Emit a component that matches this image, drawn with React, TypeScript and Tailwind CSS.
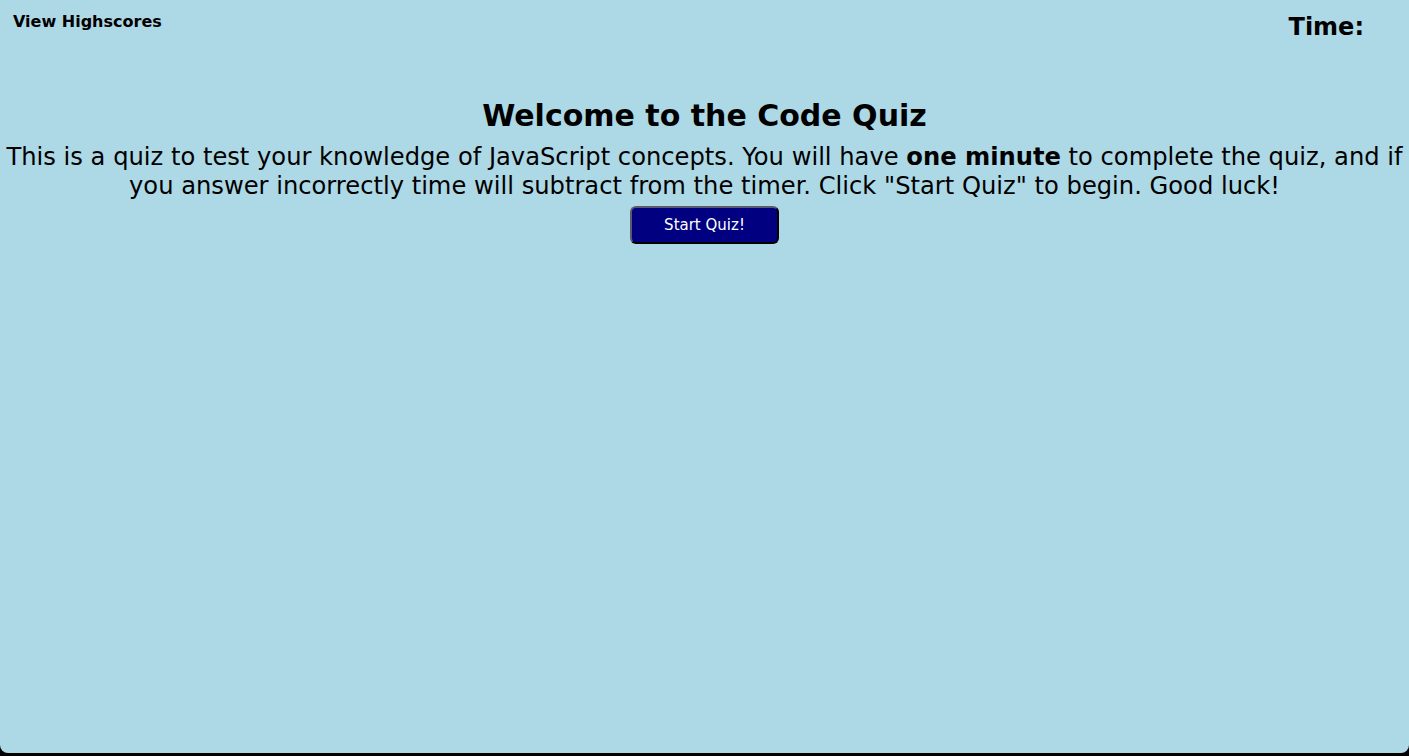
import React from 'react';

const App: React.FC = () => {
  return (
    <div className="h-[756px] w-full bg-black">
      <div className="h-[753px] w-full bg-[#add8e6] rounded-b-[8px] text-black font-['DejaVu_Sans',Verdana,sans-serif]">
        {/* Header */}
        <header className="flex justify-between items-start pl-[13px] pr-[45px] pt-[12px]">
          <a className="text-[16px] leading-[19px] font-bold cursor-pointer">View Highscores</a>
          <div className="mt-[1px] text-[24px] leading-[28px] font-bold">Time:</div>
        </header>

        {/* Intro */}
        <main className="text-center">
          <h1 className="mt-[58px] text-[30px] leading-[33px] font-bold">Welcome to the Code Quiz</h1>
          <p className="mt-[11px] text-[24.2px] leading-[29px]">
            This is a quiz to test your knowledge of JavaScript concepts. You will have <b>one minute</b> to complete the quiz, and if
            <br />
            you answer incorrectly time will subtract from the timer. Click "Start Quiz" to begin. Good luck!
          </p>
          <button className="mt-[5px] w-[149px] h-[38px] bg-[#000080] text-white text-[15px] rounded-[6px] border-2 border-[#5a5a6a] border-r-black border-b-black">
            Start Quiz!
          </button>
        </main>
      </div>
    </div>
  );
};

export default App;
